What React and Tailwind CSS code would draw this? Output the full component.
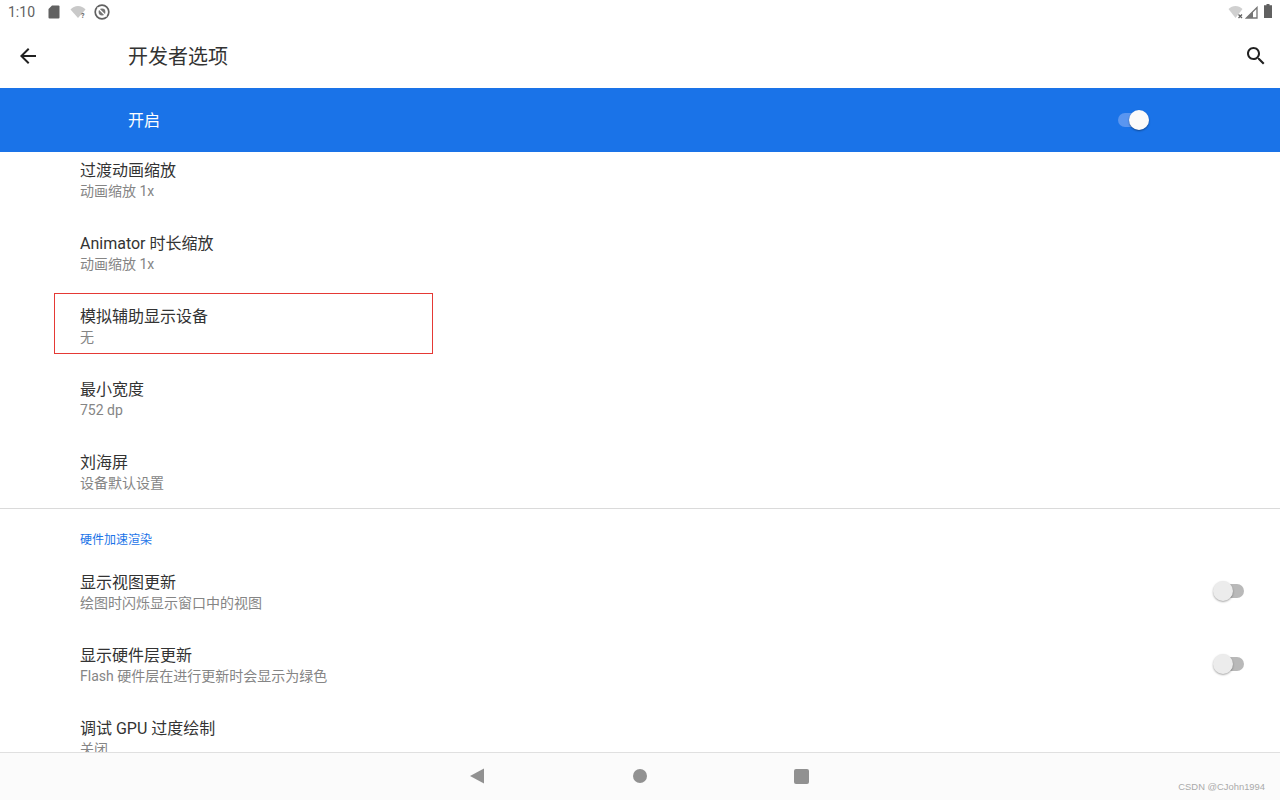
import React from 'react'

const font = "font-['Roboto','Noto_Sans_CJK_SC',sans-serif]"

const Toggle = ({ on }) => (
  <div className="relative w-[32px] h-[22px] flex items-center">
    {on ? (
      <>
        <div className="absolute left-0 w-[31px] h-[14px] rounded-full bg-[#5a96f0]" />
        <div className="absolute left-[11px] w-[20px] h-[20px] rounded-full bg-[#fafafa] shadow-[0_1px_2px_rgba(0,0,0,0.4)]" />
      </>
    ) : (
      <>
        <div className="absolute left-[1px] w-[30px] h-[14px] rounded-full bg-[#b9b9b9]" />
        <div className="absolute left-0 w-[20px] h-[20px] rounded-full bg-[#ececec] shadow-[0_1px_2px_rgba(0,0,0,0.35)]" />
      </>
    )}
  </div>
)

const Row = ({ title, summary, toggle, highlighted }) => (
  <div className="relative h-[73px] pl-[80px] pr-[35px] flex items-center justify-between">
    <div className="flex flex-col">
      <div className="text-[16px] leading-[22px] text-[#333333]">{title}</div>
      <div className="text-[14px] leading-[20px] -mt-[1px] pb-[1px] text-[#858585]">{summary}</div>
    </div>
    {toggle && <div className="-mt-[3px]"><Toggle /></div>}
    {highlighted && (
      <div className="absolute left-[54px] top-[3px] w-[379px] h-[61px] border border-[#e53935]" />
    )}
  </div>
)

const StatusIcons = () => (
  <div className="flex items-center ml-[13px]">
    <svg width="12" height="14" viewBox="0 0 12 14">
      <path d="M4 0.500h6.500a1 1 0 0 1 1 1v11a1 1 0 0 1-1 1H1.500a1 1 0 0 1-1-1V4z" fill="#616161" />
    </svg>
    <svg width="17" height="14" viewBox="0 0 17 14" className="ml-[10px]">
      <path d="M0.500 4.500C2.500 2.500 5 1 8 1s5.500 1.500 7.500 3.500L8 13z" fill="#c9c9c9" />
      <text x="11" y="13" fontSize="7" fontWeight="700" fill="#616161" fontFamily="Roboto">?</text>
    </svg>
    <svg width="16" height="16" viewBox="0 0 16 16" className="ml-[7px]">
      <circle cx="8" cy="8" r="6.800" fill="none" stroke="#616161" strokeWidth="1.700" />
      <circle cx="8" cy="8" r="3.400" fill="#757575" />
      <path d="M3.500 3.500l9 9" stroke="#fff" strokeWidth="1.300" />
    </svg>
  </div>
)

export default function App() {
  return (
    <div className={`w-[1280px] h-[800px] overflow-hidden bg-white flex flex-col ${font}`}>
      <div className="h-[24px] shrink-0 flex items-center justify-between pl-[8px] pr-[8px]">
        <div className="flex items-center">
          <span className="text-[14px] text-[#616161]">1:10</span>
          <StatusIcons />
        </div>
        <div className="flex items-center">
          <svg width="16" height="14" viewBox="0 0 16 14">
            <path d="M0.500 4C2.500 2 5 1 7.500 1s5 1 7 3L7.500 13z" fill="#d0d0d0" />
            <path d="M10.500 9.500l3.500 3.500M14 9.500l-3.500 3.500" stroke="#616161" strokeWidth="1.300" />
          </svg>
          <svg width="13" height="13" viewBox="0 0 13 13" className="ml-[1px]">
            <path d="M12 1.500V12H1.500z" fill="none" stroke="#757575" strokeWidth="1.300" />
            <path d="M8 5.500V12H1.500z" fill="#757575" />
          </svg>
          <svg width="8" height="14" viewBox="0 0 8 14" className="ml-[6px] -mt-[3px]">
            <path d="M2.500 0h3v1.200H8V14H0V1.200h2.500z" fill="#616161" />
          </svg>
        </div>
      </div>

      <div className="h-[64px] shrink-0 flex items-center justify-between pl-[16px] pr-[12px]">
        <div className="flex items-center">
          <svg width="24" height="24" viewBox="0 0 24 24" fill="#212121">
            <path d="M20 11H7.830l5.590-5.590L12 4l-8 8 8 8 1.410-1.410L7.830 13H20v-2z" />
          </svg>
          <span className="ml-[88px] text-[20px] pt-[1px] text-[#333333]">开发者选项</span>
        </div>
        <svg width="24" height="24" viewBox="0 0 24 24" fill="#212121">
          <path d="M15.500 14h-.79l-.28-.27C15.410 12.590 16 11.110 16 9.500 16 5.910 13.090 3 9.500 3S3 5.910 3 9.500 5.910 16 9.500 16c1.610 0 3.090-.59 4.230-1.570l.27.28v.79l5 4.990L20.490 19l-4.990-5zm-6 0C7.010 14 5 11.990 5 9.500S7.010 5 9.500 5 14 7.010 14 9.500 11.990 14 9.500 14z" />
        </svg>
      </div>

      <div className="h-[64px] shrink-0 bg-[#1a73e8] flex items-center justify-between pl-[128px] pr-[130px]">
        <span className="text-[16px] pt-[1px] text-white">开启</span>
        <Toggle on />
      </div>

      <div className="flex-1 overflow-hidden">
        <div className="-mt-[8px]">
          <Row title="过渡动画缩放" summary="动画缩放 1x" />
          <Row title="Animator 时长缩放" summary="动画缩放 1x" />
          <Row title="模拟辅助显示设备" summary="无" highlighted />
          <Row title="最小宽度" summary="752 dp" />
          <div className="-mb-[1px]">
            <Row title="刘海屏" summary="设备默认设置" />
          </div>
          <div className="border-t border-[#dadada] h-[48px] pl-[80px] pt-[23px] text-[12px] leading-[17px] text-[#1a73e8]">
            硬件加速渲染
          </div>
          <Row title="显示视图更新" summary="绘图时闪烁显示窗口中的视图" toggle />
          <Row title="显示硬件层更新" summary="Flash 硬件层在进行更新时会显示为绿色" toggle />
          <Row title="调试 GPU 过度绘制" summary="关闭" />
        </div>
      </div>

      <div className="relative h-[48px] shrink-0 bg-[#fbfbfb] border-t border-[#e0e0e0] flex items-center justify-center pr-[2px] pb-[1px]">
        <svg width="14" height="16" viewBox="0 0 14 16">
          <path d="M0 8L14 0.500v15z" fill="#919191" />
        </svg>
        <div className="ml-[149px] w-[14px] h-[14px] rounded-full bg-[#919191]" />
        <div className="ml-[147px] w-[15px] h-[15px] rounded-[2px] bg-[#919191]" />
        <span className="absolute right-[15px] top-[28px] text-[9.400px] leading-[12px] text-[#aaaaaa] font-['Liberation_Sans',sans-serif]">
          CSDN @CJohn1994
        </span>
      </div>
    </div>
  )
}
